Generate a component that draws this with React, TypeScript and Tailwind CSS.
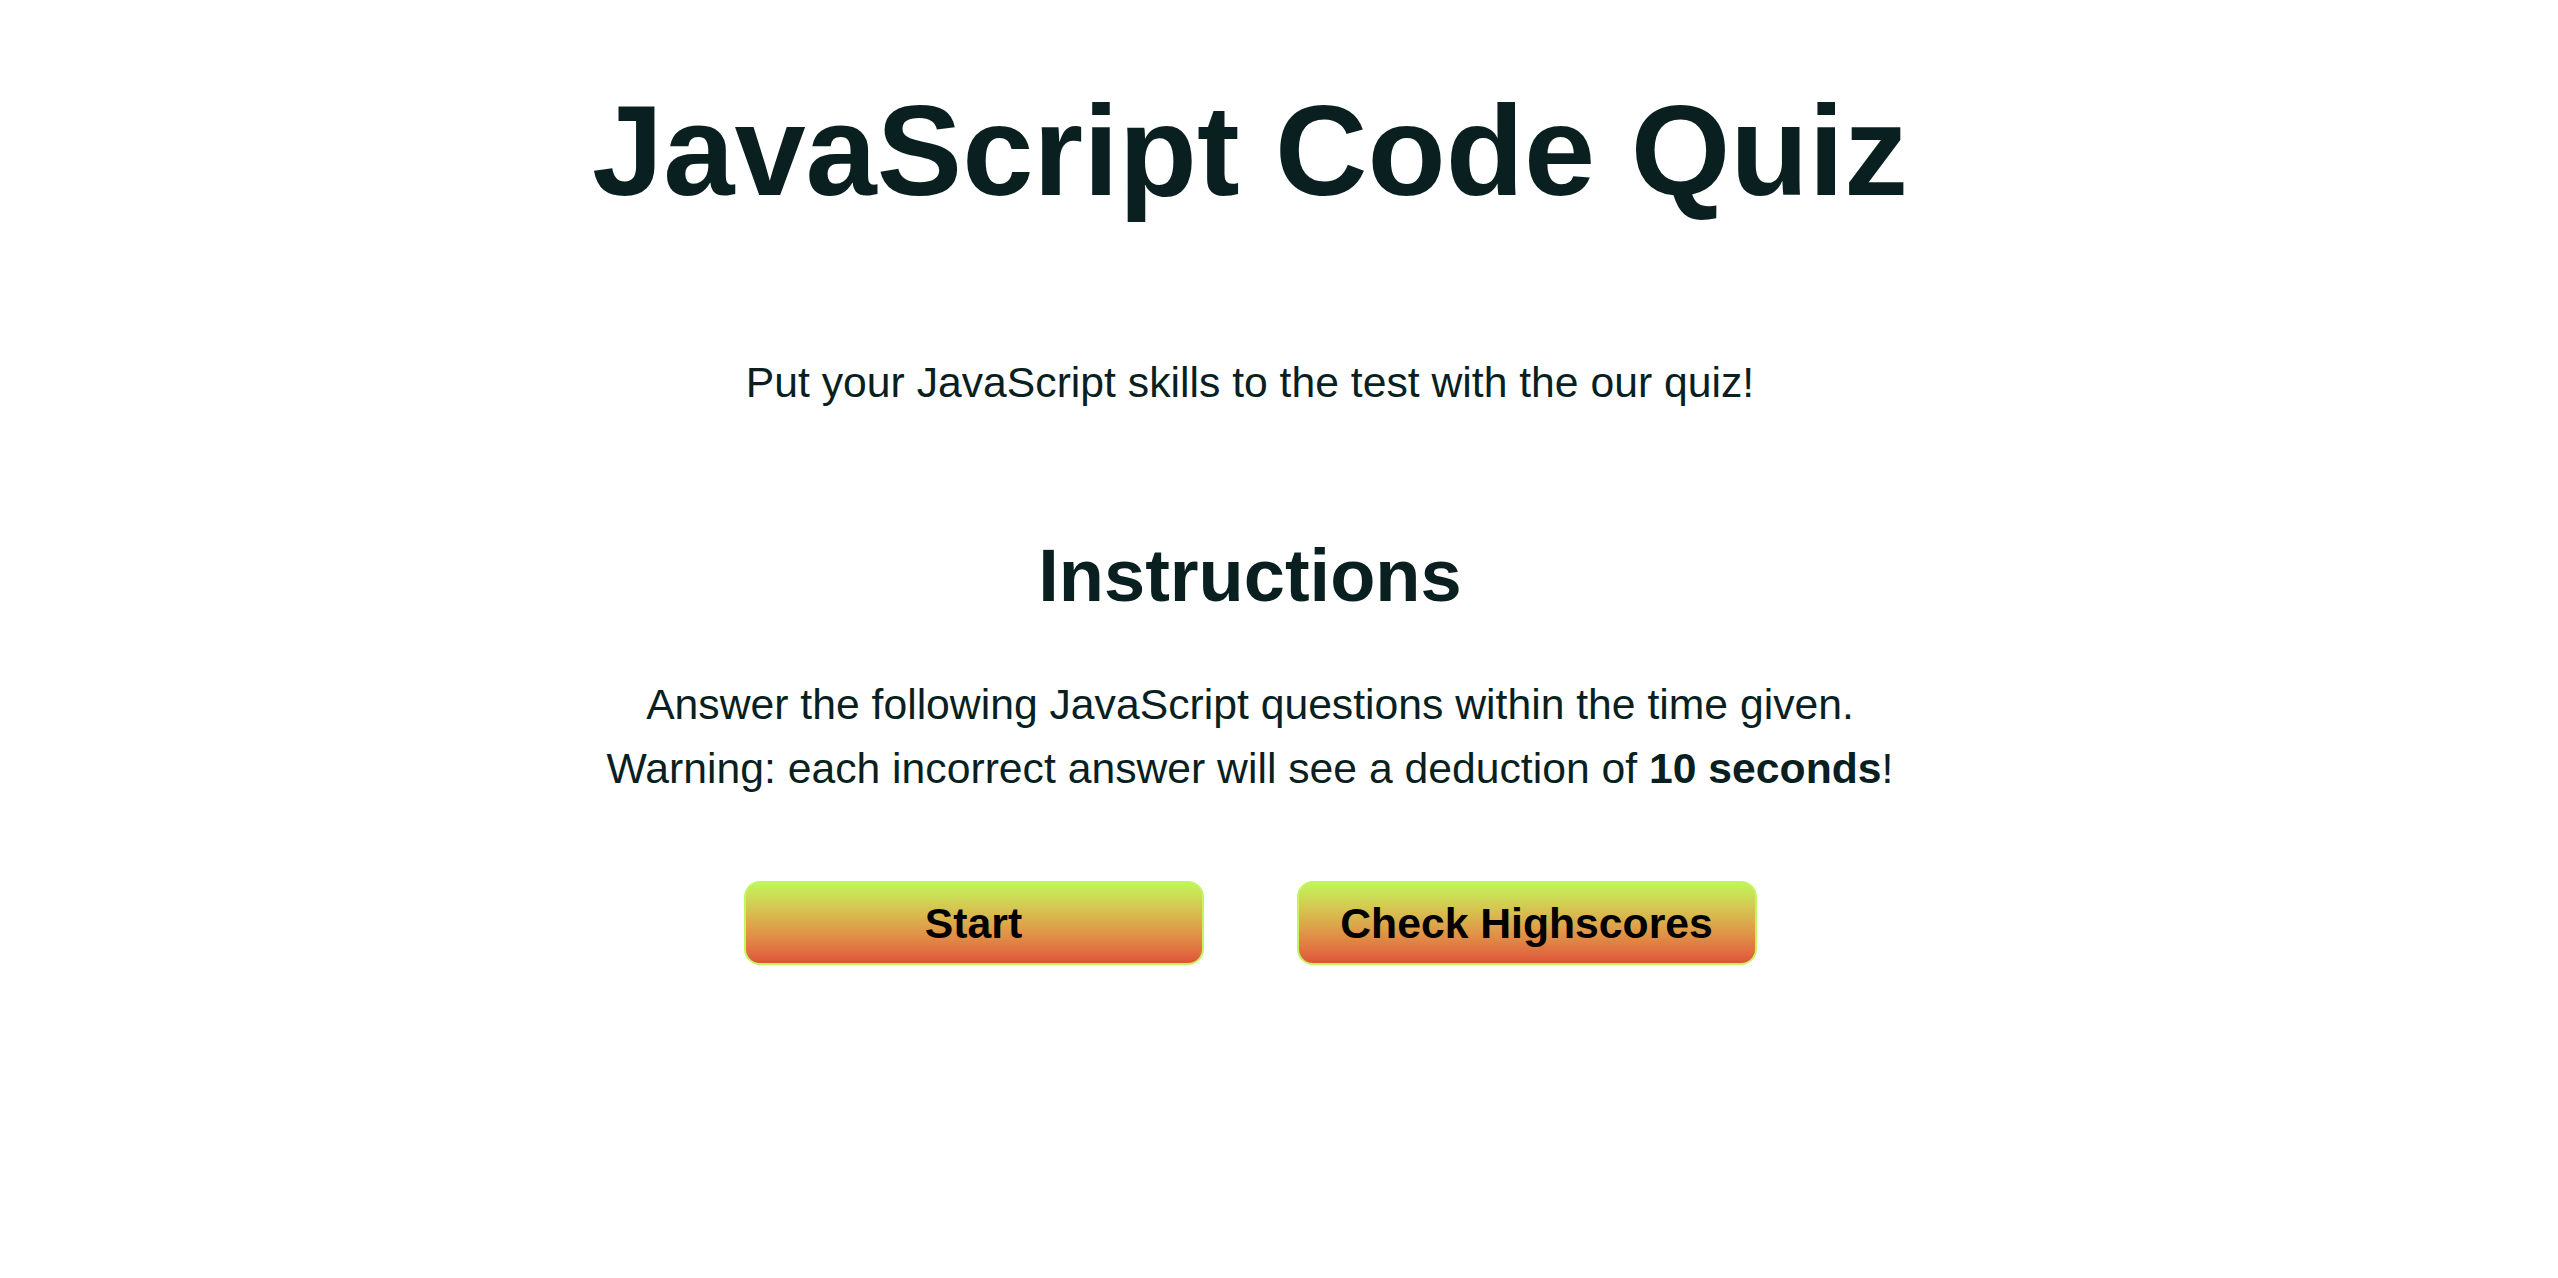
export default function App() {
  const font = { fontFamily: '"Liberation Sans", Arial, Helvetica, sans-serif' };
  return (
    <div
      className="min-h-[1278px] w-full bg-white pr-[58px] flex flex-col items-center text-center text-[#0a1f1f]"
      style={font}
    >
      <h1 className="pt-[87px] text-[128px] leading-[128px] font-bold whitespace-nowrap">
        JavaScript Code Quiz
      </h1>
      <p className="mt-[135px] text-[42.7px] leading-[64px] whitespace-nowrap">
        Put your JavaScript skills to the test with the our quiz!
      </p>
      <h2 className="mt-[125px] text-[74px] leading-[74px] font-bold whitespace-nowrap">
        Instructions
      </h2>
      <p className="mt-[59px] text-[42.7px] leading-[64px] whitespace-nowrap">
        Answer the following JavaScript questions within the time given.
        <br />
        Warning: each incorrect answer will see a deduction of <strong className="font-bold">10 seconds</strong>!
      </p>
      <div className="mt-[81px] flex gap-[93px]">
        <button className="w-[460px] h-[84px] rounded-[16px] border-2 border-[#c2f55e] bg-gradient-to-b from-[#bff55b] to-[#e0523b] text-black text-[42.7px] leading-[80px] font-bold">
          Start
        </button>
        <button className="w-[460px] h-[84px] rounded-[16px] border-2 border-[#c2f55e] bg-gradient-to-b from-[#bff55b] to-[#e0523b] text-black text-[42.7px] leading-[80px] font-bold">
          Check Highscores
        </button>
      </div>
    </div>
  );
}
